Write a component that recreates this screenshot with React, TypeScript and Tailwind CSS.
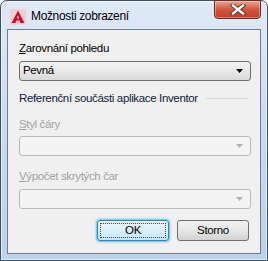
import React from "react";

const font = { fontFamily: '"Liberation Sans", Arial, sans-serif' };

function AcadIcon() {
  return (
    <svg width="16" height="16" viewBox="0 0 16 16">
      <rect x="0" y="0" width="16" height="16" rx="1" fill="#f3d0d0" />
      <path d="M8 1.5 L14.5 14 L10.5 14 L9.6 11.6 L6.4 11.6 L5.5 14 L1.5 14 Z M8 6 L7 9.4 L9 9.4 Z" fill="#c8102e" fillRule="evenodd" />
    </svg>
  );
}

function CloseButton() {
  return (
    <div className="w-[47px] h-[19px] -mt-px rounded-b-[4px] border border-[#6b2a22] bg-gradient-to-b from-[#e8a493] via-[#d2553f] to-[#c73c24] shadow-[inset_0_0_0_1px_rgba(255,255,255,0.35)] flex items-center justify-center">
      <svg width="16" height="11" viewBox="0 0 16 11">
        <path d="M3 1.5 L13 9.5 M13 1.5 L3 9.5" stroke="#4a3330" strokeWidth="4.2" strokeLinecap="square" />
        <path d="M3 1.5 L13 9.5 M13 1.5 L3 9.5" stroke="#ffffff" strokeWidth="2.4" strokeLinecap="square" />
      </svg>
    </div>
  );
}

function Combo({ value, disabled }: { value?: string; disabled?: boolean }) {
  return (
    <div
      className={
        disabled
          ? "h-[20px] rounded-[3px] border border-[#b6bcc2] bg-[#f4f4f4] flex items-center pr-[7px]"
          : "h-[20px] rounded-[3px] border border-[#707070] bg-gradient-to-b from-[#f3f3f3] via-[#e9e9e9] to-[#d9d9d9] flex items-center pl-[3px] pr-[7px]"
      }
    >
      <span className="flex-1 leading-none text-black">{value}</span>
      <svg width="7" height="4" viewBox="0 0 7 4">
        <path d="M0 0 L7 0 L3.5 4 Z" fill={disabled ? "#b0b4b8" : "#000000"} />
      </svg>
    </div>
  );
}

export default function App() {
  return (
    <div style={font} className="w-[268px] h-[261px] flex flex-col rounded-t-[7px] border border-[#3e4d60] bg-gradient-to-b from-[#dfeaf7] via-[#c8dbef] to-[#bcd2ea] shadow-[inset_0_0_0_1px_rgba(255,255,255,0.6)] text-[11.5px] tracking-[-0.35px]">
      <div className="h-[28px] flex items-start pl-[9px] pr-[6px]">
        <div className="mt-[8px]">
          <AcadIcon />
        </div>
        <span className="ml-[5px] mt-[7px] text-[12px] leading-[16px] text-black">Možnosti zobrazení</span>
        <div className="ml-auto">
          <CloseButton />
        </div>
      </div>
      <div className="flex-1 mx-[6px] mb-[6px] border border-[#6f7f91] bg-[#f0f0f0] flex flex-col pl-[11px] pr-[9px] text-black">
        <div className="mt-[10px] h-[16px] leading-[16px]">
          <span className="underline">Z</span>arovnání pohledu
        </div>
        <div className="mt-[5px]">
          <Combo value="Pevná" />
        </div>
        <div className="mt-[9px] h-[16px] leading-[16px] flex items-center text-[#121a3c]">
          <span>Referenční součásti aplikace Inventor</span>
          <div className="flex-1 ml-[8px] mr-[3px] h-px bg-[#d3dae1]" />
        </div>
        <div className="mt-[10px] h-[16px] leading-[16px] text-[#a3a3a3]">
          <span className="underline">S</span>tyl čáry
        </div>
        <div className="mt-[4px]">
          <Combo disabled />
        </div>
        <div className="mt-[12px] h-[16px] leading-[16px] text-[#a3a3a3]">
          <span className="underline">V</span>ýpočet skrytých čar
        </div>
        <div className="mt-[5px]">
          <Combo disabled />
        </div>
        <div className="mt-[11px] flex justify-end gap-[8px] pr-[2px]">
          <div className="w-[72px] h-[21px] rounded-[3px] border border-[#3c7fb1] bg-gradient-to-b from-[#eaf6fd] via-[#d9f0fc] to-[#bee6fd] shadow-[0_0_2px_1px_#48c8f0] p-[2px]">
            <div className="w-full h-full border border-dotted border-[#7a2e2e] flex items-center justify-center leading-none">
              OK
            </div>
          </div>
          <div className="w-[72px] h-[21px] rounded-[3px] border border-[#707070] bg-gradient-to-b from-[#f2f2f2] via-[#e6e6e6] to-[#d2d2d2] flex items-center justify-center leading-none">
            Storno
          </div>
        </div>
      </div>
    </div>
  );
}
